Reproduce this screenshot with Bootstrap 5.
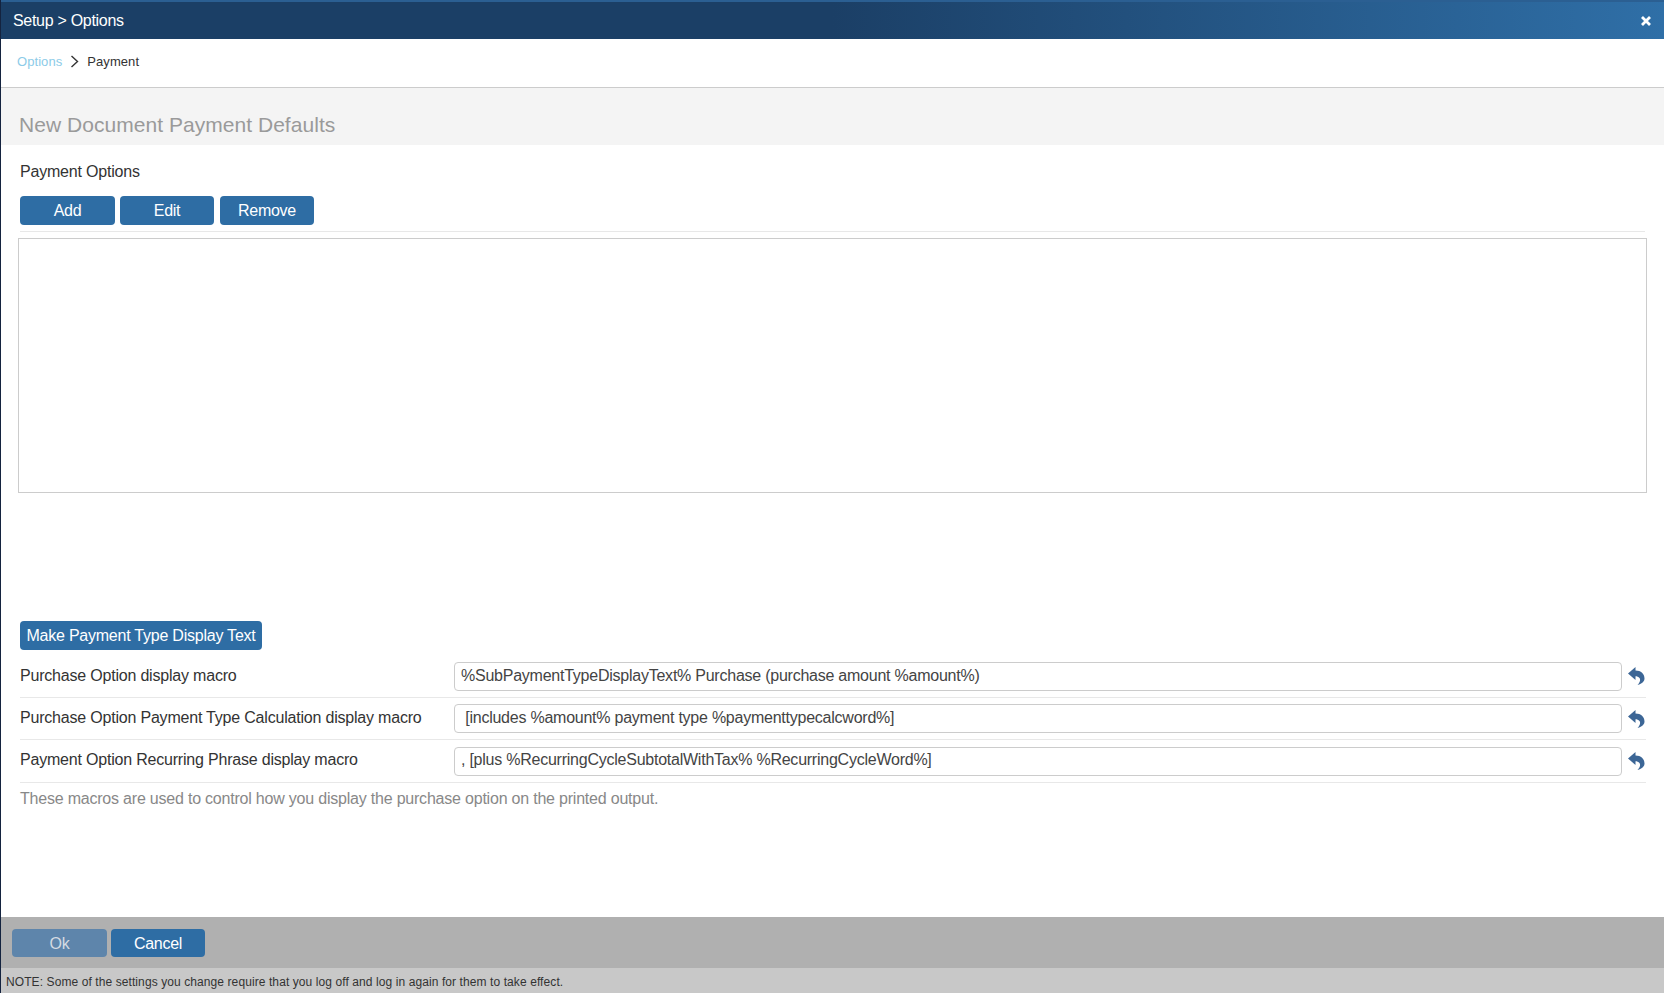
<!DOCTYPE html>
<html lang="en">
<head>
<meta charset="utf-8">
<title>Setup Options</title>
<link href="https://cdn.jsdelivr.net/npm/bootstrap@5.3.0/dist/css/bootstrap.min.css" rel="stylesheet">
<style>
html,body{height:993px;overflow:hidden;background:#fff}
body{font-family:"Liberation Sans",Arial,sans-serif;font-size:16px;color:#333}
.shell{height:993px;border-left:1px solid #14233f;display:flex;flex-direction:column}
.topbar{height:39px;flex:none;background:linear-gradient(90deg,#1b3f66 0%,#1b3f66 50%,#2f6fa7 100%);border-top:2px solid #2b5f92;color:#fff;padding:0 13px 0 12px;display:flex;align-items:center;justify-content:space-between;letter-spacing:-.3px}
.crumbs{height:49px;flex:none;border-bottom:1px solid #ccc;padding:0 0 3px 16px;display:flex;align-items:center;font-size:13px;color:#333;letter-spacing:.07px}
.crumbs a{color:#8ccbe8;text-decoration:none}
.crumbs svg{margin:0 8px 0 8px}
.sect{height:57px;flex:none;background:#f4f4f4;padding:23px 0 0 18px;font-size:21px;line-height:28px;color:#9a9a9a;letter-spacing:.04px}
.main{flex:1;padding:0 18px;min-height:0}
.lbl{height:51px;padding:17px 0 0 1px;line-height:20px;letter-spacing:-.2px}
.acts{padding:0 0 6px 0;border-bottom:1px solid #e8e8e8;margin:0 1px 0 1px;display:flex;gap:5px}
.bbtn{background:#2e6da4;border:0;color:#fff;border-radius:4px;height:29px;width:94px;padding:0;font-size:16px;line-height:29px;letter-spacing:-.3px}
.acts .bbtn:first-child{width:95px}
.acts .bbtn:last-child{margin-left:1px}
.listbox{height:255px;border:1px solid #ccc;margin:6px -1px 0}
.makebtn{width:242px;margin:128px 0 0 1px;display:block;white-space:nowrap;letter-spacing:-.23px}
.mrow{display:flex;align-items:center;height:42px;border-bottom:1px solid #e8e8e8;margin:0 0 0 1px}
.mrow label{width:434px;flex:none;margin:0;line-height:20px;padding-bottom:2px;letter-spacing:-.2px}
.mrow .form-control{flex:1;height:29px;padding:0 6px 2px;border:1px solid #ccc;border-radius:4px;font-size:16px;color:#444;letter-spacing:-.24px;box-shadow:none}
.undo{width:23px;flex:none;text-align:right;line-height:0;margin-right:1px}
.first{height:36px;margin-top:12px;padding-bottom:7px}
.first label{padding-bottom:0}
.mrow.first .form-control{padding-bottom:0}
.last{height:43px}
.hlp{color:#888;line-height:20px;padding:6px 0 0 1px;letter-spacing:-.21px}
.foot{height:51px;flex:none;background:#b0b0b0;padding:12px 0 0 11px;display:flex;gap:4px;margin-top:auto}
.foot .bbtn{height:28px;line-height:28px;padding-top:1px}
.foot .bbtn.off{background:#5e85ab;color:#d4dbe2;opacity:1;width:95px}
.note{height:25px;flex:none;background:#c8c8c8;font-size:12px;line-height:28px;padding-left:5px;color:#333;letter-spacing:.09px}
</style>
</head>
<body>
<div class="shell">
  <div class="topbar"><span>Setup &gt; Options</span>
    <svg width="10" height="10" viewBox="0 0 10 10" aria-label="Close"><path d="M1 1 9 9M9 1 1 9" stroke="#fff" stroke-width="2.8"/></svg>
  </div>
  <div class="crumbs"><a href="#">Options</a>
    <svg width="9" height="13" viewBox="0 0 9 13"><path d="M1.500 1 7.500 6.500 1.500 12" fill="none" stroke="#333" stroke-width="1.4"/></svg>
    <span>Payment</span></div>
  <div class="sect">New Document Payment Defaults</div>
  <div class="main">
    <div class="lbl">Payment Options</div>
    <div class="acts">
      <button class="btn bbtn" type="button">Add</button>
      <button class="btn bbtn" type="button">Edit</button>
      <button class="btn bbtn" type="button">Remove</button>
    </div>
    <div class="listbox"></div>
    <button class="btn bbtn makebtn" type="button">Make Payment Type Display Text</button>
    <div class="mrow first"><label>Purchase Option display macro</label>
      <input class="form-control" value="%SubPaymentTypeDisplayText% Purchase (purchase amount %amount%)">
      <span class="undo"><svg width="17" height="18" viewBox="0 0 17 18"><path d="M0 6.500 7.500 0V3.500C13 3.500 16.500 7 16.500 11.500 16.500 14 14.500 16.700 9.500 18 12.500 15 12.500 12.500 11.500 11 10.500 9.800 9 9.300 7.500 9.300V13Z" fill="#3c6696"/></svg></span></div>
    <div class="mrow"><label>Purchase Option Payment Type Calculation display macro</label>
      <input class="form-control" value=" [includes %amount% payment type %paymenttypecalcword%]">
      <span class="undo"><svg width="17" height="18" viewBox="0 0 17 18"><path d="M0 6.500 7.500 0V3.500C13 3.500 16.500 7 16.500 11.500 16.500 14 14.500 16.700 9.500 18 12.500 15 12.500 12.500 11.500 11 10.500 9.800 9 9.300 7.500 9.300V13Z" fill="#3c6696"/></svg></span></div>
    <div class="mrow last"><label>Payment Option Recurring Phrase display macro</label>
      <input class="form-control" value=", [plus %RecurringCycleSubtotalWithTax% %RecurringCycleWord%]">
      <span class="undo"><svg width="17" height="18" viewBox="0 0 17 18"><path d="M0 6.500 7.500 0V3.500C13 3.500 16.500 7 16.500 11.500 16.500 14 14.500 16.700 9.500 18 12.500 15 12.500 12.500 11.500 11 10.500 9.800 9 9.300 7.500 9.300V13Z" fill="#3c6696"/></svg></span></div>
    <div class="hlp">These macros are used to control how you display the purchase option on the printed output.</div>
  </div>
  <div class="foot">
    <button class="btn bbtn off" type="button">Ok</button>
    <button class="btn bbtn" type="button">Cancel</button>
  </div>
  <div class="note">NOTE: Some of the settings you change require that you log off and log in again for them to take effect.</div>
</div>
<script src="https://cdn.jsdelivr.net/npm/bootstrap@5.3.0/dist/js/bootstrap.bundle.min.js"></script>
</body>
</html>
